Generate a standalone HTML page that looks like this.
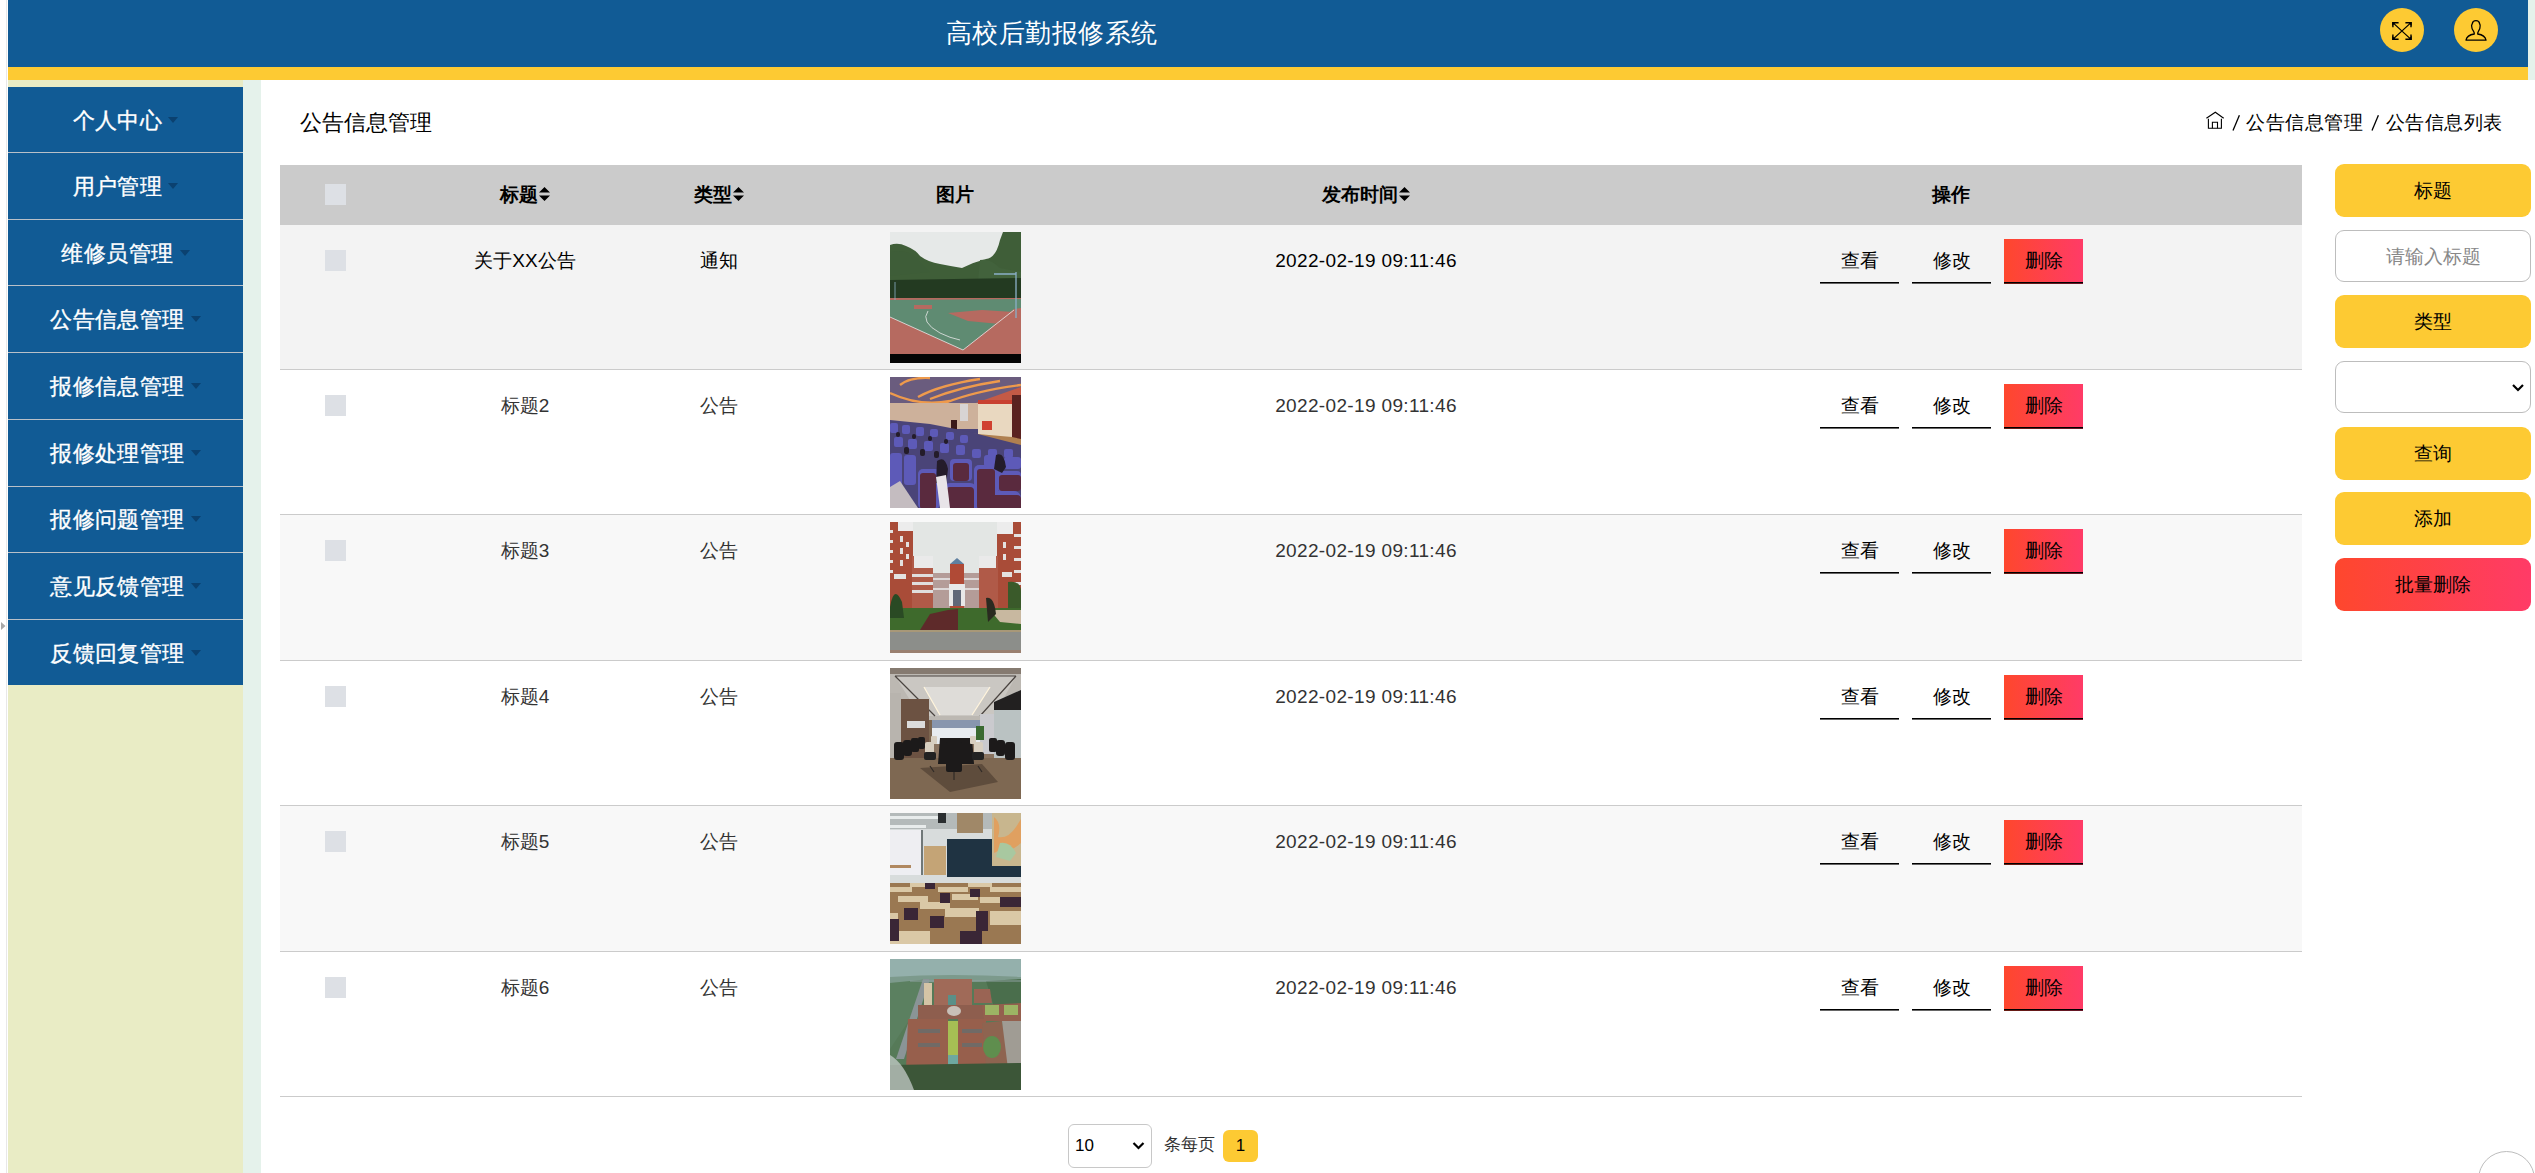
<!DOCTYPE html>
<html><head><meta charset="utf-8">
<style>
*{box-sizing:border-box;margin:0;padding:0}
html,body{width:2535px;height:1173px;overflow:hidden;background:#fff;font-family:"Liberation Sans",sans-serif;color:#000}
.a{position:absolute}
.hdr{left:8px;top:0;width:2520px;height:67px;background:#115b95}
.ybar{left:8px;top:67px;width:2520px;height:13px;background:#fdca33}
.rstrip{left:2528px;top:0;width:7px;height:80px;background:#e5f2eb}
.lline{left:6px;top:0;width:1px;height:1173px;background:#e8e8e8}
.title{left:0;top:14px;width:2103px;text-align:center;font-size:26px;line-height:38px;color:#fff;letter-spacing:0.5px;text-indent:0.5px}
.circ{width:44px;height:44px;border-radius:50%;background:#fdca33}
.sbbg{left:8px;top:80px;width:235px;height:1093px;background:#e9ecc5}
.gstrip{left:243px;top:80px;width:18px;height:1093px;background:#e5f2eb}
.mi{left:8px;width:235px;height:66px;padding-top:2px;letter-spacing:0.45px;background:#115b95;color:#fff;font-size:22px;-webkit-text-stroke:0.35px #fff;text-align:center;display:flex;align-items:center;justify-content:center}
.mi i{display:inline-block;width:0;height:0;border-left:5.8px solid transparent;border-right:5.8px solid transparent;border-top:6px solid #0b4170;margin-left:6px;position:relative;top:-1px}
.sep{left:8px;width:235px;height:1px;background:#b9c0c8}
.ctitle{left:300px;top:107px;font-size:22px;line-height:32px;color:#000}
.bc{top:108.5px;letter-spacing:0.55px;font-size:19px;line-height:28px;color:#000}
.thead{left:280px;top:165px;width:2022px;height:60px;background:#cbcbcb}
.th{top:165px;height:60px;line-height:60px;font-size:19px;font-weight:bold;text-align:center}
.cb{width:21px;height:21px;background:#dde0e5}
.row{left:280px;width:2022px;height:145px;border-bottom:1px solid #cbcbcb}
.td{font-size:19px;line-height:28px;text-align:center;color:#333}
.dt{letter-spacing:0.35px}
.btn{width:79px;height:45px;background:linear-gradient(#000,#000) left bottom/100% 1.6px no-repeat;font-size:19px;text-align:center;line-height:43px;color:#000}
.a.del{background:linear-gradient(#000,#000) left bottom/100% 1.6px no-repeat,linear-gradient(90deg,#fe472d,#ff3b67)}
.a.rb.del{background:linear-gradient(90deg,#fe472d,#ff3b67)}
.rb{left:2335px;width:196px;height:53px;border-radius:9px;background:#fdca33;font-size:19px;text-align:center;line-height:53px;color:#000}
.rin{left:2335px;width:196px;height:52px;border-radius:9px;border:1px solid #bdbdbd;background:#fff;font-size:19px;text-align:center;line-height:52px;color:#888}
</style></head><body>
<div class="a lline"></div>
<div class="a hdr"></div>
<div class="a ybar"></div>
<div class="a rstrip"></div>
<div class="a title">高校后勤报修系统</div>
<div class="a circ" style="left:2380px;top:8px"></div>
<div class="a circ" style="left:2454px;top:8px"></div>
<svg class="a" style="left:2391px;top:21px" width="22" height="20" viewBox="0 0 22 20"><g stroke="#000" fill="none"><path d="M2.6 2.4L19.2 17.6M19.2 2.4L2.6 17.6" stroke-width="1.25"/><path d="M1.9 6.3V1.8H7.6M14.4 1.8H20V6.3M1.9 13.4V18.2H7.6M14.4 18.2H20V13.4" stroke-width="1.4"/></g><path d="M1.2 1.1H5.2L1.2 5.1Z M20.7 1.1H16.7L20.7 5.1Z M1.2 18.9H5.4L1.2 14.7Z M20.7 18.9H16.5L20.7 14.7Z" fill="#000"/></svg>
<svg class="a" style="left:2464px;top:19px" width="24" height="23" viewBox="0 0 24 23"><g stroke="#000" stroke-width="1.3" fill="none" stroke-linejoin="round"><path d="M12 1.6C9.6 1.6 8.5 3 8.3 4.6C7.6 5.6 7.4 7 7.8 8.2C7.6 9.6 8.6 11 9.6 12.4C10.2 13.2 10.3 14 10.3 15C6 15.6 2.6 17.6 2 21.2H22C21.4 17.6 18 15.6 13.7 15C13.7 14 13.8 13.2 14.4 12.4C15.4 11 16.2 9.6 16 8.2C16.4 7 16.2 5.6 15.6 4.6C15.4 3 14.4 1.6 12 1.6Z"/></g></svg>

<div class="a sbbg"></div>
<div class="a gstrip"></div>
<div class="a mi" style="top:87px">个人中心<i></i></div>
<div class="a mi" style="top:153px">用户管理<i></i></div>
<div class="a mi" style="top:220px">维修员管理<i></i></div>
<div class="a mi" style="top:286px">公告信息管理<i></i></div>
<div class="a mi" style="top:353px">报修信息管理<i></i></div>
<div class="a mi" style="top:420px">报修处理管理<i></i></div>
<div class="a mi" style="top:486px">报修问题管理<i></i></div>
<div class="a mi" style="top:553px">意见反馈管理<i></i></div>
<div class="a mi" style="top:620px;height:65px">反馈回复管理<i></i></div>
<div class="a sep" style="top:152px"></div>
<div class="a sep" style="top:219px"></div>
<div class="a sep" style="top:285px"></div>
<div class="a sep" style="top:352px"></div>
<div class="a sep" style="top:419px"></div>
<div class="a sep" style="top:486px"></div>
<div class="a sep" style="top:552px"></div>
<div class="a sep" style="top:619px"></div>

<div class="a ctitle">公告信息管理</div>
<svg class="a" style="left:2205px;top:111px" width="20" height="19" viewBox="0 0 20 19"><g stroke="#000" stroke-width="1.1" fill="none"><path d="M1.4 7.3L10.3 1.2L18.7 7.3"/><path d="M3.4 7.8V17.3H16.4V7.8"/><path d="M7.4 17.3V11.3H12.5V17.3"/></g></svg>
<svg class="a" style="left:2231px;top:114px" width="10" height="18" viewBox="0 0 10 18"><path d="M2 16.6L8.4 1.2" stroke="#000" stroke-width="1.3"/></svg>
<div class="a bc" style="left:2246px">公告信息管理</div>
<svg class="a" style="left:2370px;top:114px" width="10" height="18" viewBox="0 0 10 18"><path d="M2 16.6L8.4 1.2" stroke="#000" stroke-width="1.3"/></svg>
<div class="a bc" style="left:2385.5px">公告信息列表</div>

<div class="a thead"></div>
<div class="a cb" style="left:325px;top:184px"></div>
<div class="a th" style="left:425px;width:200px">标题<svg width="11" height="15" viewBox="0 0 11 15" style="vertical-align:-1px;margin-left:1px"><path d="M0 5.5L5.5 0L11 5.5Z M0 8.5L5.5 14L11 8.5Z" fill="#000"/></svg></div>
<div class="a th" style="left:619px;width:200px">类型<svg width="11" height="15" viewBox="0 0 11 15" style="vertical-align:-1px;margin-left:1px"><path d="M0 5.5L5.5 0L11 5.5Z M0 8.5L5.5 14L11 8.5Z" fill="#000"/></svg></div>
<div class="a th" style="left:855px;width:200px">图片</div>
<div class="a th" style="left:1216px;width:300px">发布时间<svg width="11" height="15" viewBox="0 0 11 15" style="vertical-align:-1px;margin-left:1px"><path d="M0 5.5L5.5 0L11 5.5Z M0 8.5L5.5 14L11 8.5Z" fill="#000"/></svg></div>
<div class="a th" style="left:1851px;width:200px">操作</div>

<!--ROWS-->
<div class="a row" style="top:225px;height:145px;background:#f3f3f3"></div>
<div class="a cb" style="left:325px;top:250px"></div>
<div class="a td" style="left:425px;width:200px;top:247px;color:#000">关于XX公告</div>
<div class="a td" style="left:619px;width:200px;top:247px;color:#000">通知</div>
<div class="a" style="left:890px;top:232px;width:131px;height:131px"><svg width="131" height="131" viewBox="0 0 131 131" style="display:block">
<rect width="131" height="131" fill="#e6e9e8"/>
<path d="M0 13 Q8 10 16 14 Q26 18 30 24 Q38 30 50 32 Q60 34 72 36 Q84 30 96 27 Q106 26 110 8 L113 0 L131 0 L131 68 L0 68Z" fill="#3f5e38"/>
<path d="M0 20 Q20 16 30 30 L40 40 L0 44Z" fill="#3e5d38"/>
<path d="M90 28 Q100 26 110 36 L131 40 L131 50 L88 50Z" fill="#42623c"/>
<path d="M0 48 L131 46 L131 68 L0 68Z" fill="#233a21"/>
<rect y="66" width="131" height="57" fill="#b66a60"/>
<path d="M0 68 L131 67 L131 76 L124 77 L73 118 L0 85Z" fill="#5f8b72"/>
<path d="M58 81 L92 78 L124 80 L110 92 L78 89Z" fill="#b66a60"/>
<path d="M24 73 L42 73 L42 77 L24 77Z" fill="#b66a60"/>
<path d="M0 85 L73 118 L124 78 M38 79 Q30 90 50 101 Q60 106 70 108" stroke="#e8e8e8" stroke-width="0.8" fill="none"/>
<path d="M126 40 L126 86 M104 42 L126 42" stroke="#8ab0c8" stroke-width="1.3"/>
<path d="M5 50 L5 68" stroke="#8ab0c8" stroke-width="0.8"/>
<rect y="122" width="131" height="9" fill="#050505"/>
</svg></div>
<div class="a td dt" style="left:1216px;width:300px;top:247px;color:#000">2022-02-19 09:11:46</div>
<div class="a btn" style="left:1820px;top:239px">查看</div>
<div class="a btn" style="left:1912px;top:239px">修改</div>
<div class="a btn del" style="left:2004px;top:239px">删除</div>
<div class="a row" style="top:370px;height:145px;background:#fff"></div>
<div class="a cb" style="left:325px;top:395px"></div>
<div class="a td" style="left:425px;width:200px;top:392px">标题2</div>
<div class="a td" style="left:619px;width:200px;top:392px">公告</div>
<div class="a" style="left:890px;top:377px;width:131px;height:131px"><svg width="131" height="131" viewBox="0 0 131 131" style="display:block">
<rect width="131" height="131" fill="#4a4478"/>
<rect y="0" width="131" height="28" fill="#6a5c7e"/>
<path d="M0 16 Q30 30 60 24 M10 8 Q20 0 40 1 M28 20 Q50 8 90 2 M40 22 Q70 10 110 4 M55 26 Q85 14 131 8" stroke="#ee9a4c" stroke-width="2.4" fill="none"/>
<path d="M80 28 L131 10 L131 28Z" fill="#c45a46"/>
<rect y="26" width="131" height="26" fill="#cdb19b"/>
<rect x="70" y="27" width="8" height="17" fill="#d8d4d4"/>
<rect x="88" y="23" width="34" height="38" fill="#e9d8c0"/>
<rect x="88" y="23" width="34" height="4" fill="#c84030"/>
<rect x="92" y="44" width="10" height="9" fill="#d04030"/>
<rect x="122" y="18" width="9" height="52" fill="#5a2220"/>
<rect x="61" y="43" width="6" height="12" fill="#3a1818"/>
<path d="M76 56 L122 60 L131 62 L131 70 L80 64Z" fill="#b08050"/>
<path d="M0 43 L40 47 L76 54 L131 68 L131 131 L0 131Z" fill="#4a4478"/>
<g fill="#5d5ab8">
<rect x="0" y="46" width="8" height="10" rx="2"/><rect x="12" y="48" width="8" height="9" rx="2"/><rect x="26" y="50" width="8" height="9" rx="2"/><rect x="40" y="52" width="8" height="8" rx="2"/><rect x="56" y="55" width="8" height="8" rx="2"/><rect x="70" y="58" width="8" height="8" rx="2"/>
<rect x="4" y="60" width="9" height="10" rx="2"/><rect x="18" y="62" width="9" height="10" rx="2"/><rect x="34" y="64" width="9" height="10" rx="2"/><rect x="50" y="66" width="9" height="10" rx="2"/><rect x="66" y="68" width="9" height="10" rx="2"/><rect x="82" y="72" width="9" height="9" rx="2"/><rect x="98" y="72" width="9" height="9" rx="2"/><rect x="114" y="72" width="9" height="9" rx="2"/>
<rect x="0" y="76" width="12" height="44" rx="3"/><rect x="14" y="78" width="12" height="30" rx="3"/><rect x="28" y="92" width="22" height="40" rx="5"/><rect x="53" y="106" width="34" height="28" rx="7"/><rect x="60" y="82" width="22" height="22" rx="4"/><rect x="84" y="88" width="24" height="44" rx="5"/><rect x="97" y="114" width="34" height="20" rx="7"/><rect x="106" y="94" width="25" height="20" rx="4"/><rect x="94" y="78" width="16" height="12" rx="3"/><rect x="114" y="80" width="17" height="12" rx="3"/>
</g>
<g fill="#5a2a3e">
<rect x="30" y="96" width="16" height="36" rx="3"/><rect x="56" y="110" width="28" height="24" rx="4"/><rect x="63" y="86" width="16" height="18" rx="3"/><rect x="87" y="92" width="18" height="40" rx="3"/><rect x="100" y="118" width="31" height="16" rx="4"/><rect x="109" y="98" width="22" height="16" rx="3"/>
</g>
<g fill="#241c2a">
<rect x="6" y="55" width="4" height="5" rx="2"/><rect x="22" y="57" width="4" height="5" rx="2"/><rect x="38" y="59" width="4" height="5" rx="2"/><rect x="54" y="62" width="4" height="5" rx="2"/><rect x="14" y="70" width="5" height="7" rx="2"/><rect x="30" y="72" width="5" height="7" rx="2"/><rect x="44" y="74" width="5" height="7" rx="2"/>
<path d="M47 84 Q55 78 58 92 L56 108 L46 106Z"/><path d="M106 78 Q114 74 116 90 L112 96 L104 92Z"/>
</g>
<path d="M0 110 L10 104 L28 131 L0 131Z" fill="#c4bcc0"/>
<path d="M46 100 L56 98 L60 131 L50 131Z" fill="#e8e4e8"/>
</svg></div>
<div class="a td dt" style="left:1216px;width:300px;top:392px">2022-02-19 09:11:46</div>
<div class="a btn" style="left:1820px;top:384px">查看</div>
<div class="a btn" style="left:1912px;top:384px">修改</div>
<div class="a btn del" style="left:2004px;top:384px">删除</div>
<div class="a row" style="top:515px;height:146px;background:#f8f8f8"></div>
<div class="a cb" style="left:325px;top:540px"></div>
<div class="a td" style="left:425px;width:200px;top:537px">标题3</div>
<div class="a td" style="left:619px;width:200px;top:537px">公告</div>
<div class="a" style="left:890px;top:522px;width:131px;height:131px"><svg width="131" height="131" viewBox="0 0 131 131" style="display:block">
<rect width="131" height="131" fill="#e3e6e4"/>
<rect x="0" y="0" width="23" height="86" fill="#a94c38"/>
<rect x="8" y="0" width="15" height="9" fill="#ececec"/>
<g fill="#e4e2e0"><rect x="0" y="8" width="3" height="3"/><rect x="0" y="18" width="3" height="3"/><rect x="0" y="28" width="3" height="3"/><rect x="0" y="38" width="3" height="3"/><rect x="0" y="48" width="3" height="3"/><rect x="4" y="52" width="12" height="5"/><rect x="10" y="14" width="3" height="6"/><rect x="10" y="26" width="3" height="6"/><rect x="10" y="38" width="3" height="6"/><rect x="16" y="20" width="3" height="5"/><rect x="16" y="32" width="3" height="5"/></g>
<rect x="107" y="0" width="24" height="86" fill="#a94c38"/>
<rect x="107" y="0" width="16" height="12" fill="#ececec"/>
<g fill="#e4e2e0"><rect x="124" y="12" width="7" height="3"/><rect x="124" y="24" width="7" height="3"/><rect x="124" y="36" width="7" height="3"/><rect x="124" y="48" width="7" height="3"/><rect x="124" y="60" width="7" height="3"/><rect x="112" y="50" width="10" height="5"/><rect x="113" y="20" width="3" height="6"/><rect x="113" y="32" width="3" height="6"/></g>
<rect x="22" y="34" width="21" height="52" fill="#b05a48"/>
<rect x="24" y="34" width="19" height="12" fill="#eaeaea"/>
<g fill="#e0dede"><rect x="22" y="52" width="21" height="3"/><rect x="22" y="60" width="21" height="3"/><rect x="22" y="68" width="21" height="3"/><rect x="88" y="52" width="20" height="3"/><rect x="88" y="60" width="20" height="3"/><rect x="88" y="68" width="20" height="3"/></g>
<rect x="89" y="34" width="19" height="52" fill="#b05a48"/>
<rect x="89" y="34" width="17" height="12" fill="#eaeaea"/>
<rect x="43" y="51" width="46" height="36" fill="#b49c98"/>
<g fill="#ddd8d8"><rect x="43" y="56" width="17" height="2"/><rect x="74" y="56" width="15" height="2"/><rect x="43" y="66" width="17" height="2"/><rect x="74" y="66" width="15" height="2"/></g>
<rect x="60" y="42" width="14" height="45" fill="#b04a36"/>
<path d="M60 42 L67 36 L74 42Z" fill="#6080a0"/>
<rect x="59" y="62" width="16" height="22" fill="#e8e8e8"/>
<rect x="63" y="68" width="8" height="16" fill="#606878"/>
<path d="M0 86 L131 86 L131 109 L0 109Z" fill="#3e6a2c"/>
<path d="M30 108 L40 92 L58 88 L68 87 L68 108Z" fill="#5e2a2a"/>
<path d="M100 88 L131 88 L131 102 L110 100Z" fill="#c8b8a0"/>
<path d="M0 85 Q4 62 12 80 L14 96 L0 96Z" fill="#2a4a24"/>
<path d="M118 60 Q131 58 131 70 L131 86 L118 86Z" fill="#3a5a2a"/>
<path d="M96 76 Q104 74 106 92 L98 100Z" fill="#2a2a20"/>
<rect x="0" y="108" width="131" height="23" fill="#8c8e8a"/>
<rect x="0" y="108" width="131" height="2" fill="#a89878"/>
<rect x="0" y="128" width="131" height="3" fill="#9a8070"/>
</svg></div>
<div class="a td dt" style="left:1216px;width:300px;top:537px">2022-02-19 09:11:46</div>
<div class="a btn" style="left:1820px;top:529px">查看</div>
<div class="a btn" style="left:1912px;top:529px">修改</div>
<div class="a btn del" style="left:2004px;top:529px">删除</div>
<div class="a row" style="top:661px;height:145px;background:#fff"></div>
<div class="a cb" style="left:325px;top:686px"></div>
<div class="a td" style="left:425px;width:200px;top:683px">标题4</div>
<div class="a td" style="left:619px;width:200px;top:683px">公告</div>
<div class="a" style="left:890px;top:668px;width:131px;height:131px"><svg width="131" height="131" viewBox="0 0 131 131" style="display:block">
<rect width="131" height="131" fill="#7c6650"/>
<rect x="0" y="0" width="131" height="52" fill="#bcb8b2"/>
<rect x="0" y="0" width="131" height="6" fill="#857a70"/>
<path d="M5 8 L126 8 L104 48 L30 48Z" fill="#cac7c2"/>
<path d="M5 8 L126 8 M5 8 L45 48 M126 8 L90 48" stroke="#4a4440" stroke-width="1.2" fill="none"/>
<path d="M34 19 L100 19 L82 47 L50 47Z" fill="#dedcd8"/>
<path d="M34 19 L50 47 M100 19 L82 47" stroke="#fff4dc" stroke-width="1.3"/>
<rect x="0" y="25" width="11" height="66" fill="#b8b4ae"/>
<rect x="11" y="31" width="28" height="60" fill="#6c5242"/>
<rect x="17" y="53" width="18" height="7" fill="#dcdcdc"/>
<rect x="42" y="52" width="48" height="8" fill="#8896ae"/>
<rect x="42" y="60" width="48" height="16" fill="#e8ecf0"/>
<rect x="39" y="76" width="65" height="16" fill="#8a7460"/>
<rect x="90" y="46" width="14" height="40" fill="#cacace"/>
<rect x="86" y="58" width="8" height="14" fill="#3a6a30"/>
<path d="M104 34 L131 22 L131 92 L104 92Z" fill="#bac2c2"/>
<path d="M104 34 L131 22 L131 42 L104 42Z" fill="#222020"/>
<rect x="0" y="90" width="131" height="41" fill="#7e6852"/>
<path d="M30 100 L92 96 L108 114 L60 124Z" fill="#5e4c3c"/>
<g fill="#1c1a1a">
<rect x="4" y="74" width="10" height="18" rx="3"/><rect x="13" y="72" width="9" height="16" rx="3"/><rect x="21" y="70" width="8" height="14" rx="2"/><rect x="28" y="69" width="7" height="12" rx="2"/>
<rect x="106" y="72" width="9" height="16" rx="3"/><rect x="115" y="74" width="10" height="18" rx="3"/><rect x="99" y="70" width="8" height="14" rx="2"/>
<path d="M50 70 L82 70 L84 96 L48 96Z"/>
<rect x="56" y="74" width="16" height="30" rx="2"/>
</g>
<g fill="#d8cfc0"><rect x="35" y="74" width="9" height="12" rx="2"/><rect x="84" y="74" width="9" height="12" rx="2"/><rect x="41" y="68" width="6" height="8" rx="1"/><rect x="80" y="68" width="6" height="8" rx="1"/></g>
<g fill="#222"><rect x="34" y="84" width="12" height="8" rx="2"/><rect x="82" y="84" width="12" height="8" rx="2"/></g>
<path d="M40 98 L44 104 M88 98 L92 104 M64 104 L64 112" stroke="#302a26" stroke-width="1.2"/>
</svg></div>
<div class="a td dt" style="left:1216px;width:300px;top:683px">2022-02-19 09:11:46</div>
<div class="a btn" style="left:1820px;top:675px">查看</div>
<div class="a btn" style="left:1912px;top:675px">修改</div>
<div class="a btn del" style="left:2004px;top:675px">删除</div>
<div class="a row" style="top:806px;height:146px;background:#f8f8f8"></div>
<div class="a cb" style="left:325px;top:831px"></div>
<div class="a td" style="left:425px;width:200px;top:828px">标题5</div>
<div class="a td" style="left:619px;width:200px;top:828px">公告</div>
<div class="a" style="left:890px;top:813px;width:131px;height:131px"><svg width="131" height="131" viewBox="0 0 131 131" style="display:block">
<rect width="131" height="131" fill="#9a7852"/>
<rect x="0" y="0" width="131" height="70" fill="#d8dcdc"/>
<rect x="0" y="0" width="102" height="16" fill="#b4baba"/>
<rect x="0" y="3" width="50" height="3" fill="#e8ecec"/>
<rect x="0" y="12" width="36" height="3" fill="#e8ecec"/>
<rect x="48" y="0" width="8" height="10" fill="#2a2e30"/>
<rect x="67" y="0" width="26" height="20" fill="#a08868"/>
<rect x="0" y="17" width="31" height="45" fill="#eeeef2"/>
<rect x="31" y="17" width="2" height="45" fill="#707878"/>
<rect x="34" y="33" width="22" height="29" fill="#c4a476"/>
<rect x="57" y="26" width="74" height="38" fill="#1f3342"/>
<rect x="102" y="0" width="29" height="53" fill="#c8b68e"/>
<path d="M104 4 Q112 10 108 24 Q118 26 126 14 L131 6 L131 30 Q120 40 112 36 L104 40Z" fill="#e0a060"/>
<path d="M110 30 Q120 28 126 40 L120 48 L106 44Z" fill="#a8c8a0"/>
<rect x="0" y="52" width="21" height="3" fill="#b08860"/>
<g fill="#dac8a6">
<rect x="0" y="74" width="22" height="5"/>
<rect x="8" y="83" width="30" height="6"/>
<rect x="30" y="89" width="30" height="7"/>
<rect x="55" y="95" width="34" height="9"/>
<rect x="100" y="98" width="31" height="14"/>
<rect x="0" y="100" width="8" height="12"/>
<rect x="0" y="118" width="40" height="13"/>
<rect x="20" y="70" width="25" height="4"/>
<rect x="48" y="74" width="30" height="5"/>
<rect x="62" y="81" width="26" height="6"/>
<rect x="78" y="70" width="24" height="4"/>
<rect x="90" y="84" width="24" height="6"/>
<rect x="100" y="74" width="31" height="5"/>
</g>
<g fill="#3a2636">
<rect x="0" y="106" width="9" height="22"/>
<rect x="14" y="95" width="14" height="12"/>
<rect x="40" y="103" width="14" height="12"/>
<rect x="70" y="118" width="22" height="13"/>
<rect x="86" y="98" width="12" height="20"/>
<rect x="110" y="84" width="21" height="10"/>
<rect x="50" y="80" width="10" height="10"/>
<rect x="35" y="70" width="10" height="6"/>
<rect x="80" y="76" width="10" height="8"/>
</g>
</svg></div>
<div class="a td dt" style="left:1216px;width:300px;top:828px">2022-02-19 09:11:46</div>
<div class="a btn" style="left:1820px;top:820px">查看</div>
<div class="a btn" style="left:1912px;top:820px">修改</div>
<div class="a btn del" style="left:2004px;top:820px">删除</div>
<div class="a row" style="top:952px;height:145px;background:#fff"></div>
<div class="a cb" style="left:325px;top:977px"></div>
<div class="a td" style="left:425px;width:200px;top:974px">标题6</div>
<div class="a td" style="left:619px;width:200px;top:974px">公告</div>
<div class="a" style="left:890px;top:959px;width:131px;height:131px"><svg width="131" height="131" viewBox="0 0 131 131" style="display:block">
<rect width="131" height="131" fill="#567a58"/>
<rect x="0" y="0" width="131" height="20" fill="#94b0ac"/>
<path d="M0 18 Q60 14 131 18 L131 22 L0 24Z" fill="#7c9a8c"/>
<path d="M0 24 L40 20 L20 60 L0 90Z" fill="#5b8060"/>
<path d="M96 22 L131 20 L131 50 L104 48Z" fill="#4a6e4c"/>
<path d="M33 20 L40 20 L14 100 L6 100Z" fill="#8a9496"/>
<path d="M20 22 L131 22" stroke="#8ea0a0" stroke-width="1"/>
<path d="M44 20 L82 20 L82 46 L44 46Z" fill="#a06a58"/>
<path d="M58 36 L66 36 L66 46 L58 46Z" fill="#5a9088"/>
<path d="M34 24 L42 24 L42 48 L34 48Z" fill="#d4c4a6"/>
<path d="M84 30 L100 30 L102 44 L84 44Z" fill="#9a6454"/>
<path d="M28 46 L94 46 L96 60 L28 60Z" fill="#8e5e4e"/>
<ellipse cx="64" cy="52" rx="7" ry="5" fill="#c8c0b8"/>
<path d="M92 46 L131 44 L131 62 L94 62Z" fill="#94604e"/>
<rect x="95" y="46" width="14" height="10" fill="#9cb464"/>
<rect x="114" y="46" width="14" height="10" fill="#9cb464"/>
<path d="M18 60 L58 60 L58 110 L16 110Z" fill="#975f4c"/>
<path d="M68 60 L96 60 L96 108 L68 108Z" fill="#975f4c"/>
<path d="M28 70 L50 70 L50 74 L28 74Z M28 84 L50 84 L50 88 L28 88Z M72 70 L92 70 L92 74 L72 74Z M72 84 L92 84 L92 88 L72 88Z" fill="#706a66"/>
<rect x="58" y="62" width="10" height="34" fill="#a6be54"/>
<rect x="58" y="96" width="10" height="10" fill="#6ea8a0"/>
<path d="M92 64 L112 62 L120 108 L96 108Z" fill="#8e6450"/>
<ellipse cx="102" cy="88" rx="9" ry="11" fill="#5f8e4e"/>
<path d="M112 62 L131 62 L131 110 L118 110Z" fill="#a09c94"/>
<path d="M0 106 L131 104 L131 131 L0 131Z" fill="#3c5638"/>
<path d="M0 96 Q14 104 24 131 L0 131Z" fill="#c4ccc8" opacity="0.75"/>
</svg></div>
<div class="a td dt" style="left:1216px;width:300px;top:974px">2022-02-19 09:11:46</div>
<div class="a btn" style="left:1820px;top:966px">查看</div>
<div class="a btn" style="left:1912px;top:966px">修改</div>
<div class="a btn del" style="left:2004px;top:966px">删除</div>
<!--/ROWS-->

<div class="a rb" style="top:164px">标题</div>
<div class="a rin" style="top:230px">请输入标题</div>
<div class="a rb" style="top:295px">类型</div>
<div class="a rin" style="top:361px"></div>
<div class="a rb" style="top:427px">查询</div>
<div class="a rb" style="top:492px">添加</div>
<div class="a rb del" style="top:558px">批量删除</div>


<div class="a" style="left:1068px;top:1124px;width:84px;height:44px;border:1px solid #c8c8c8;border-radius:6px;background:#fff"></div>
<div class="a" style="left:1075px;top:1133px;font-size:17px;line-height:26px;color:#000">10</div>
<svg class="a" style="left:1132px;top:1141px" width="13" height="10" viewBox="0 0 13 10"><path d="M1.5 2L6.5 7L11.5 2" stroke="#000" stroke-width="2.2" fill="none"/></svg>
<div class="a" style="left:1164px;top:1132px;font-size:17px;line-height:26px;color:#333">条每页</div>
<div class="a" style="left:1223px;top:1130px;width:35px;height:32px;border-radius:6px;background:#fdca33;font-size:17px;line-height:32px;text-align:center;color:#000">1</div>
<svg class="a" style="left:2511px;top:383px" width="14" height="10" viewBox="0 0 14 10"><path d="M2 2L7 7L12 2" stroke="#000" stroke-width="2.2" fill="none"/></svg>
<div class="a" style="left:2478px;top:1151px;width:57px;height:57px;border-radius:50%;border:1.5px solid #bdbdbd;background:#fff"></div>
<svg class="a" style="left:0;top:621px" width="6" height="10" viewBox="0 0 6 10"><path d="M1 1L5.5 5L1 9Z" fill="#a8a8a8"/></svg>
</body></html>
